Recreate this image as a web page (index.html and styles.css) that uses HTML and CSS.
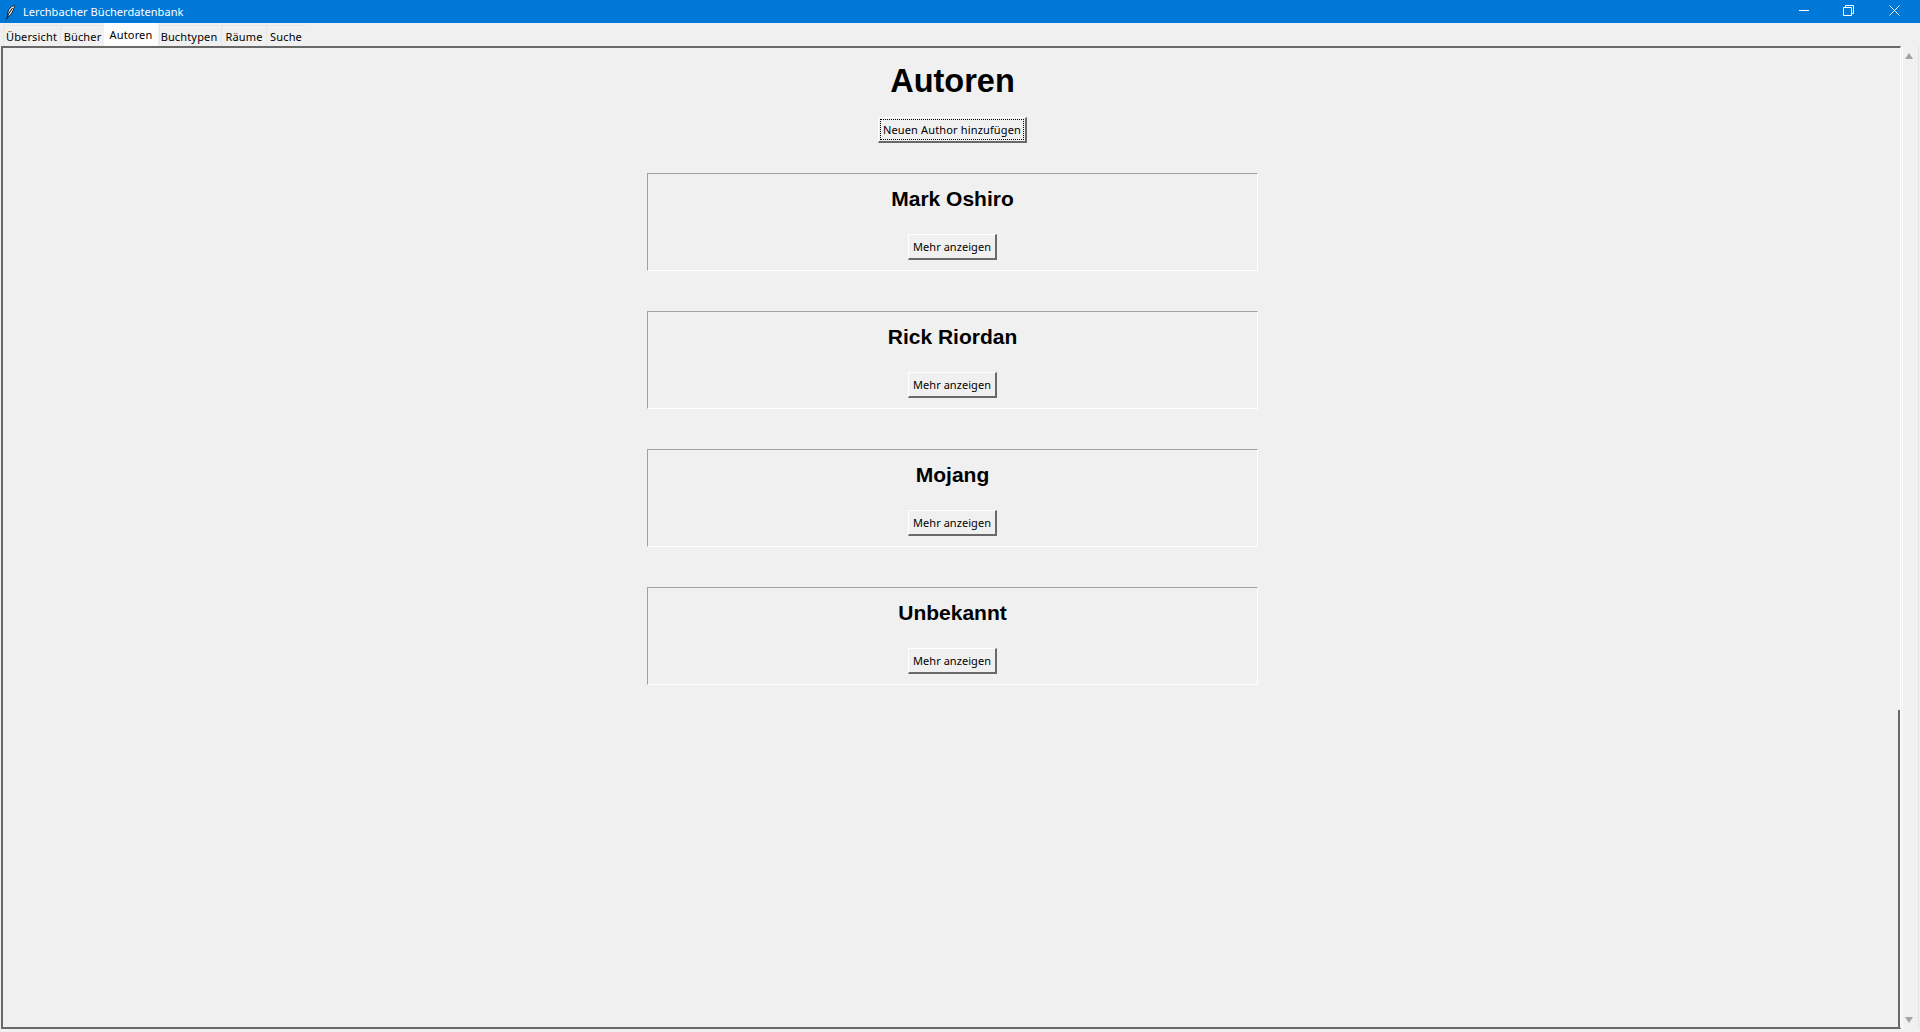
FILE: index.html
```html
<!DOCTYPE html>
<html lang="de">
<head>
<meta charset="utf-8">
<title>Lerchbacher Bücherdatenbank</title>
<link rel="stylesheet" href="styles.css">
</head>
<body>
<div class="window">
  <header class="titlebar">
    <svg class="app-icon" width="14" height="18" viewBox="0 0 14 18" aria-hidden="true">
      <path d="M10.5 2.5C7 3 4.5 6 3.8 9.5 3.4 11.5 3.6 13 3.8 14 6 13 8 10 9.3 7 10 5.5 10.4 4 10.5 2.5Z" fill="#fff" stroke="#10202e" stroke-width="1"/>
      <path d="M8.5 5 4.5 11 2.4 16.5" fill="none" stroke="#10202e" stroke-width="1.1"/>
    </svg>
    <span class="app-title">Lerchbacher Bücherdatenbank</span>
    <div class="window-controls">
      <svg width="10" height="1" viewBox="0 0 10 1" class="ctl-min" aria-hidden="true"><path d="M0 .5H10" stroke="#fff"/></svg>
      <svg width="11" height="11" viewBox="0 0 11 11" class="ctl-max" aria-hidden="true"><path d="M.5 2.5H8.5V10.5H.5ZM2.5 2.5V.5H10.5V8.5H8.5" fill="none" stroke="#fff"/></svg>
      <svg width="11" height="11" viewBox="0 0 11 11" class="ctl-close" aria-hidden="true"><path d="M.5 .5 10.5 10.5M10.5 .5 .5 10.5" stroke="#fff"/></svg>
    </div>
  </header>

  <nav class="tabs">
    <span class="tab tab-1">Übersicht</span>
    <span class="tab tab-2">Bücher</span>
    <span class="tab tab-3 active">Autoren</span>
    <span class="tab tab-4">Buchtypen</span>
    <span class="tab tab-5">Räume</span>
    <span class="tab tab-6">Suche</span>
  </nav>

  <div class="pane">
    <main class="frame">
      <h1>Autoren</h1>
      <button class="btn btn-add" type="button"><span class="focus">Neuen Author hinzufügen</span></button>
      <section class="card">
        <h2>Mark Oshiro</h2>
        <button class="btn btn-more" type="button">Mehr anzeigen</button>
      </section>
      <section class="card">
        <h2>Rick Riordan</h2>
        <button class="btn btn-more" type="button">Mehr anzeigen</button>
      </section>
      <section class="card">
        <h2>Mojang</h2>
        <button class="btn btn-more" type="button">Mehr anzeigen</button>
      </section>
      <section class="card">
        <h2>Unbekannt</h2>
        <button class="btn btn-more" type="button">Mehr anzeigen</button>
      </section>
    </main>
    <aside class="scrollbar">
      <span class="arrow arrow-up"></span>
      <span class="arrow arrow-down"></span>
    </aside>
  </div>
</div>
</body>
</html>
```

FILE: styles.css
```css
* { box-sizing: border-box; }

html, body {
  margin: 0;
  height: 100%;
  overflow: hidden;
}

body {
  background: #f0f0f0;
  color: #000;
  font: 11px "Noto Sans", "Open Sans", sans-serif;
  letter-spacing: 0.05px;
}

.window {
  display: flex;
  flex-direction: column;
  height: 1032px;
}

.titlebar {
  display: flex;
  align-items: center;
  flex: 0 0 23px;
  padding-left: 4px;
  background: #0078d7;
  color: #fff;
}

.app-icon { flex: none; margin-right: 5px; }

.app-title { line-height: 23px; }

.window-controls {
  display: flex;
  align-items: center;
  margin-left: auto;
  padding-right: 20px;
  margin-top: -3px;
}

.ctl-min { margin-right: 34px; }
.ctl-max { margin-right: 35px; }

.tabs {
  display: flex;
  align-items: flex-end;
  flex: 0 0 23px;
  padding-left: 3px;
  background: #f0f0f0;
}

.tab {
  height: 21px;
  padding-top: 1px;
  line-height: 21px;
  margin-right: 1px;
  text-align: center;
  letter-spacing: 0.15px;
  background: #f0f0f0;
  box-shadow: inset 1px 1px 0 #e6e6e6;
}

.tab-1 { width: 56px; padding-left: 1px; }
.tab-2 { width: 43px; padding-left: 2px; }
.tab-3 { width: 54px; margin-right: 0; }
.tab-4 { width: 60px; margin-left: 1px; margin-right: 2px; }
.tab-5 { width: 44px; padding-left: 2px; }
.tab-6 { width: 39px; padding-left: 1px; }

.tab.active {
  height: 23px;
  line-height: 21px;
  background: #fdfdfd;
  box-shadow: none;
}

.pane {
  display: flex;
  flex: 0 0 986px;
  padding-left: 1px;
  padding-bottom: 3px;
}

.frame {
  position: relative;
  display: flex;
  flex-direction: column;
  align-items: center;
  flex: 0 0 1900px;
  padding-left: 2px;
  border-top: 2px solid #696969;
  border-left: 2px solid #696969;
  border-bottom: 2px solid #696969;
  border-right: 1px solid #fff;
  background: #f0f0f0;
}

.frame::after {
  content: "";
  position: absolute;
  right: 0;
  top: 662px;
  bottom: 0;
  width: 2px;
  background: #696969;
}

h1 {
  margin: 14px 0 0;
  font: bold 32.5px/38px "Liberation Sans", Arial, sans-serif;
  letter-spacing: 0;
}

.btn {
  display: block;
  flex: none;
  padding: 0;
  background: #f0f0f0;
  color: #000;
  font: 11px "Noto Sans", "Open Sans", sans-serif;
  letter-spacing: 0.05px;
  white-space: nowrap;
  border: 0;
  border-top: 1px solid #fff;
  border-left: 1px solid #fff;
  border-right: 2px solid #696969;
  border-bottom: 2px solid #696969;
  border-radius: 0;
}

.btn-add {
  width: 149px;
  height: 26px;
  margin-top: 17px;
  margin-bottom: 30px;
  padding: 1px;
  letter-spacing: 0.15px;
}

.focus {
  display: block;
  height: 100%;
  line-height: 19px;
  border: 1px dotted #000;
}

.btn-more {
  width: 89px;
  height: 26px;
}

.card {
  display: flex;
  flex-direction: column;
  align-items: center;
  flex: none;
  width: 611px;
  height: 98px;
  margin-bottom: 40px;
  border-top: 1px solid #a0a0a0;
  border-left: 1px solid #a0a0a0;
  border-right: 1px solid #fff;
  border-bottom: 1px solid #fff;
}

h2 {
  margin: 13px 0 23px;
  font: bold 21px/24px "Liberation Sans", Arial, sans-serif;
  letter-spacing: 0;
}

.scrollbar {
  display: flex;
  flex-direction: column;
  justify-content: space-between;
  align-items: center;
  flex: 0 0 17px;
  margin-left: 1px;
  padding: 7px 3px 6px 0;
  background: #f0f0f0;
  border-left: 1px solid #fafafa;
  border-right: 1px solid #e4e4e4;
}

.arrow {
  width: 0;
  height: 0;
  border-left: 4px solid transparent;
  border-right: 4px solid transparent;
}

.arrow-up { border-bottom: 6px solid #a3a3a3; }
.arrow-down { border-top: 6px solid #a3a3a3; }
```
